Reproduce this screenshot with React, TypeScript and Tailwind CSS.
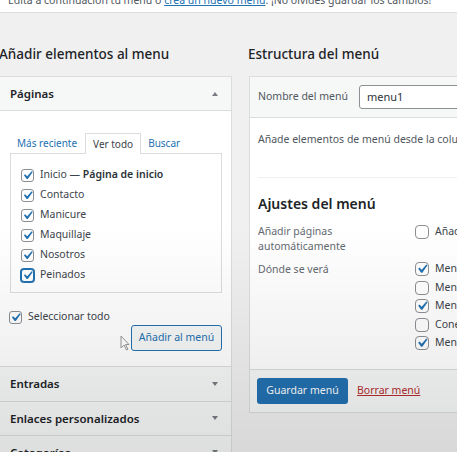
import React from 'react';

const Check: React.FC = () => (
  <svg viewBox="0 0 20 20" className="absolute -left-[3px] -top-[3px] w-[calc(100%+6px)] h-[calc(100%+6px)]">
    <path d="M14.83 4.89l1.34.94-5.81 8.38H9.02L5.78 9.67l1.34-1.25 2.57 2.4z" fill="#2271b1" />
  </svg>
);

const Box: React.FC<{ checked?: boolean; focus?: boolean; big?: boolean }> = ({ checked, focus, big }) => (
  <span
    className={`relative shrink-0 bg-white border ${big ? 'w-[14px] h-[14px] rounded-[4px]' : 'w-[13px] h-[13px] rounded-[3px]'} ${
      focus ? 'border-[#2271b1] ring-1 ring-[#2271b1]' : 'border-[#8c8f94]'
    }`}
  >
    {checked && <Check />}
  </span>
);

const Caret: React.FC<{ up?: boolean }> = ({ up }) => (
  <svg width="6" height="4" viewBox="0 0 6 4" className="text-[#787c82]">
    {up ? <path d="M0 4L3 0L6 4Z" fill="currentColor" /> : <path d="M0 0L6 0L3 4Z" fill="currentColor" />}
  </svg>
);

const SectionHeader: React.FC<{ title: string; h: string; up?: boolean }> = ({ title, h, up }) => (
  <div className={`${h} flex items-center justify-between pl-[11px] pr-[13px] bg-[#f6f7f7] border-b border-[#dcdcde]`}>
    <span className="text-[11.5px] font-semibold text-[#1d2327]">{title}</span>
    <Caret up={up} />
  </div>
);

const pages = [
  { label: 'Inicio', extra: 'Página de inicio' },
  { label: 'Contacto' },
  { label: 'Manicure' },
  { label: 'Maquillaje' },
  { label: 'Nosotros' },
  { label: 'Peinados', focus: true },
];

const locations = [
  { label: 'Menú principal', checked: true },
  { label: 'Menú secundario' },
  { label: 'Menú móvil', checked: true },
  { label: 'Conectado' },
  { label: 'Menú del pie de página', checked: true },
];

export default function App() {
  return (
    <div className="relative w-[457px] h-[452px] overflow-hidden bg-[#f0f0f1] font-['Noto_Sans',sans-serif] text-[#3c434a]">
      {/* manage menus strip */}
      <div className="h-[13px] overflow-hidden bg-white border-b border-[#dcdcde]">
        <p className="-mt-[7px] pl-[8px] text-[10.5px] leading-[14px] whitespace-nowrap text-[#50575e]">
          Edita a continuación tu menú o <span className="text-[#2271b1] underline">crea un nuevo menú</span>. ¡No olvides guardar los cambios!
        </p>
      </div>

      <div className="flex gap-[17px] pt-[31px]">
        {/* left column */}
        <div className="w-[234px] -ml-[2px] shrink-0">
          <h2 className="pl-[1px] h-[20px] leading-[20px] text-[13.5px] font-medium text-[#1d2327] whitespace-nowrap mb-[12px]">
            Añadir elementos al menu
          </h2>
          <div className="border-t border-r border-l border-[#dcdcde] bg-white h-[400px]">
            <SectionHeader title="Páginas" h="h-[34px]" up />
            <div className="pt-[22px] pl-[11px] pr-[9px] pb-[15px] border-b border-[#dcdcde] bg-white">
              <div className="flex text-[10px] leading-[20px]">
                <span className="px-[7px] text-[#2271b1]">Más reciente</span>
                <span className="ml-[1px] px-[7px] border border-b-0 border-[#dcdcde] bg-white text-[#3c434a] relative z-10 -mb-px">Ver todo</span>
                <span className="px-[7px] text-[#2271b1]">Buscar</span>
              </div>
              <div className="border border-[#dcdcde] pt-[11px] pb-[7px] pl-[10px]">
                {pages.map((p) => (
                  <div key={p.label} className="h-[20px] flex items-center gap-[6px] text-[10.5px] whitespace-nowrap">
                    <Box checked focus={p.focus} />
                    <span>
                      {p.label}
                      {p.extra && (
                        <>
                          {' — '}
                          <b className="font-semibold text-[#2c3338]">{p.extra}</b>
                        </>
                      )}
                    </span>
                  </div>
                ))}
              </div>
              <div className="flex justify-between items-start mt-[14px]">
                <div className="h-[20px] flex items-center gap-[6px] text-[10.5px] -ml-px">
                  <Box checked />
                  <span>Seleccionar todo</span>
                </div>
                <div className="relative mt-[16px]">
                  <button className="h-[26px] w-[91px] border border-[#2271b1] rounded-[3px] bg-[#f6f7f7] text-[10.5px] text-[#2271b1]">
                    Añadir al menú
                  </button>
                  <svg width="10" height="16" viewBox="0 0 10 16" className="absolute -left-[11px] top-[12px] opacity-60">
                    <path d="M1 1L1 13L4 10L6.5 15L8 14.3L5.5 9.5L9 9.5Z" fill="#fff" stroke="#555" strokeWidth="1" strokeLinejoin="round" />
                  </svg>
                </div>
              </div>
            </div>
            <SectionHeader title="Entradas" h="h-[35px]" />
            <SectionHeader title="Enlaces personalizados" h="h-[34px]" />
            <SectionHeader title="Categorías" h="h-[34px]" />
          </div>
        </div>

        {/* right column */}
        <div className="w-[260px] shrink-0">
          <h2 className="-ml-px h-[20px] leading-[20px] text-[13.5px] font-medium text-[#1d2327] whitespace-nowrap mb-[12px]">
            Estructura del menú
          </h2>
          <div className="border border-r-0 border-[#dcdcde] bg-white">
            <div className="h-[41px] flex items-center pl-[8px] gap-[11px] border-b border-[#dcdcde] bg-[#f6f7f7] whitespace-nowrap">
              <span className="text-[10.5px] text-[#50575e]">Nombre del menú</span>
              <div className="h-[24px] w-[200px] flex items-center pl-[7px] bg-white border border-[#8c8f94] rounded-[3px] text-[11px] text-[#2c3338]">
                menu1
              </div>
            </div>
            <div className="pl-[8px]">
              <p className="pt-[12px] h-[59px] text-[10.5px] leading-[18px] whitespace-nowrap text-[#50575e]">
                Añade elementos de menú desde la columna de la izquierda.
              </p>
              <div className="border-t border-[#f0f0f1] pt-[15px]">
                <h3 className="h-[22px] leading-[22px] text-[14px] font-semibold text-[#1d2327] whitespace-nowrap">
                  Ajustes del menú
                </h3>
                <div className="flex mt-[9px] h-[38px]">
                  <div className="w-[157px] shrink-0 text-[10.5px] leading-[15px] text-[#646970]">
                    Añadir páginas
                    <br />
                    automáticamente
                  </div>
                  <div className="h-[15px] flex items-center gap-[6px] text-[10.5px] whitespace-nowrap">
                    <Box big />
                    <span>Añadir automáticamente nuevas páginas</span>
                  </div>
                </div>
                <div className="flex pb-[16px]">
                  <div className="w-[157px] shrink-0 text-[10.5px] leading-[15px] text-[#646970]">Dónde se verá</div>
                  <div className="-mt-[2px]">
                    {locations.map((l) => (
                      <div key={l.label} className="h-[18.5px] flex items-center gap-[6px] text-[10.5px] whitespace-nowrap">
                        <Box big checked={l.checked} />
                        <span>{l.label}</span>
                      </div>
                    ))}
                  </div>
                </div>
              </div>
            </div>
            <div className="h-[43px] flex items-center gap-[9px] pl-[7px] border-t border-[#dcdcde] bg-[#f6f7f7]">
              <button className="h-[26px] w-[91px] rounded-[3px] bg-[#2271b1] text-[10.5px] text-white">Guardar menú</button>
              <span className="text-[10.5px] text-[#b32d2e] underline">Borrar menú</span>
            </div>
          </div>
        </div>
      </div>

      {/* video vignette */}
      <div className="pointer-events-none absolute inset-0 bg-gradient-to-b from-transparent via-transparent to-black/10" />
    </div>
  );
}
